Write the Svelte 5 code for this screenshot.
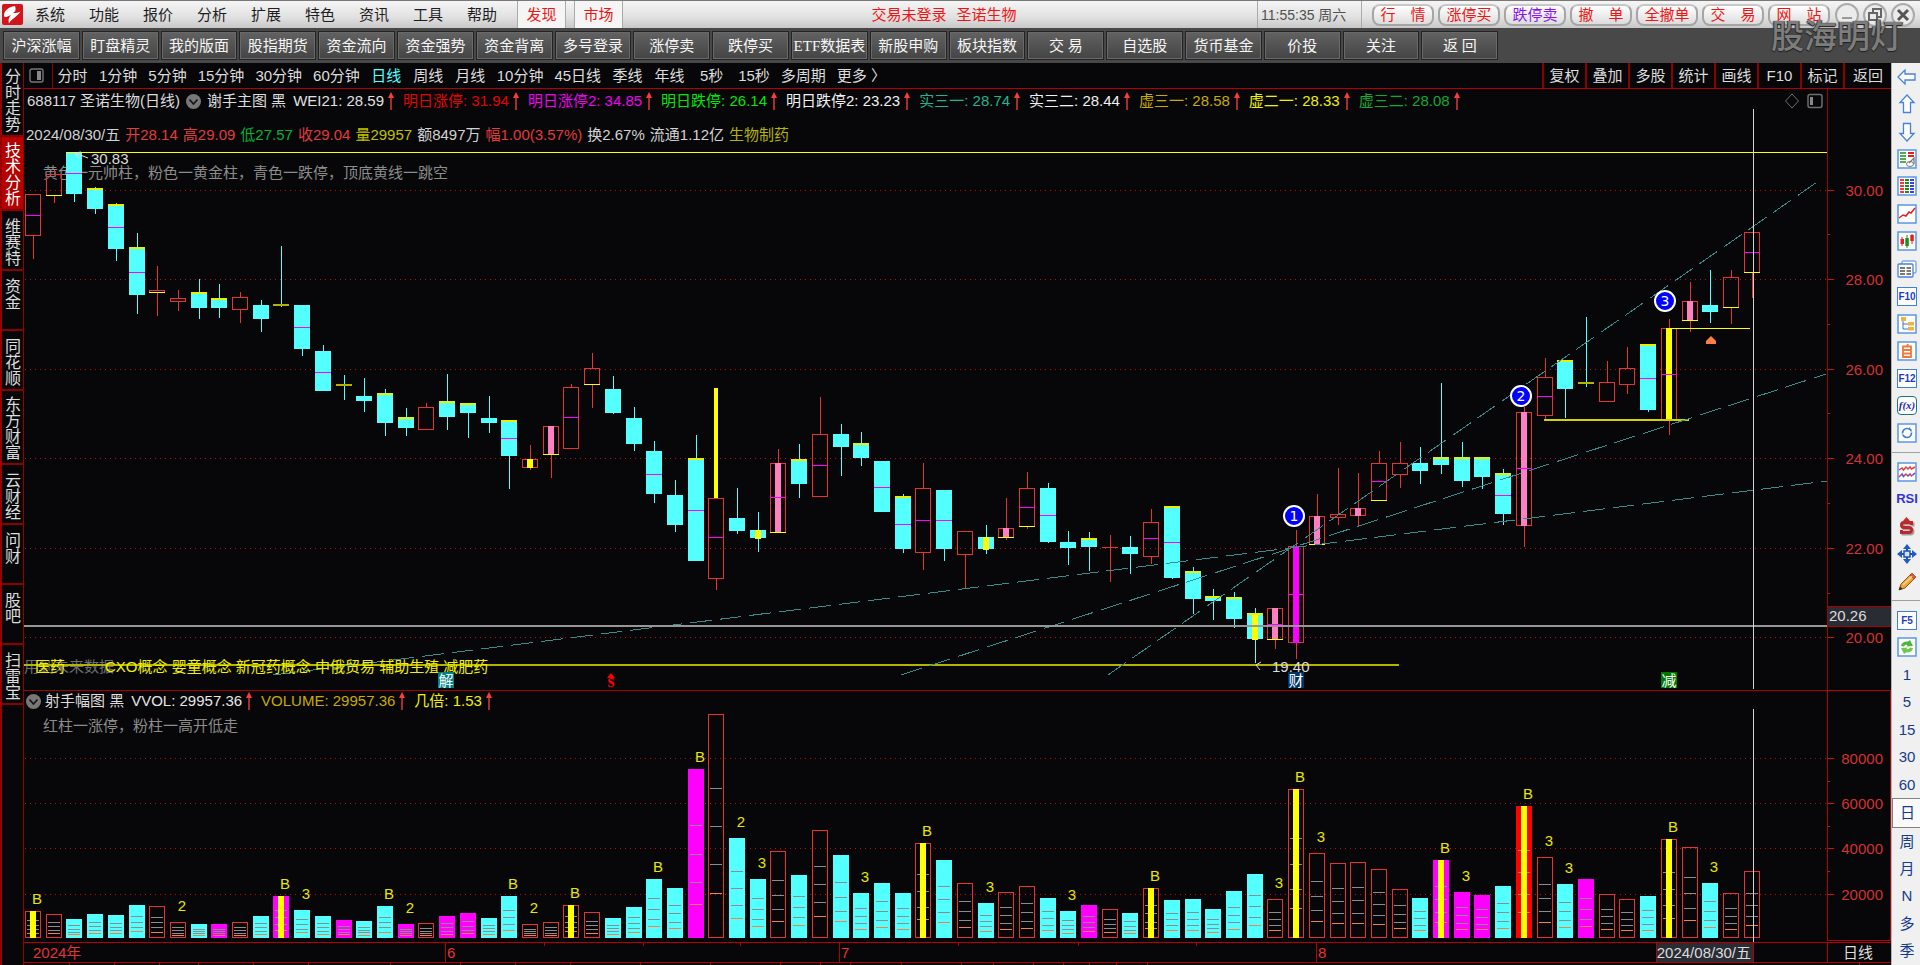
<script>
  const menus = ['系统', '功能', '报价', '分析', '扩展', '特色', '资讯', '工具', '帮助'];
  const pills = [
    ['行　情', 0], ['涨停买', 0], ['跌停卖', 1], ['撤　单', 0], ['全撤单', 0], ['交　易', 0], ['网　站', 0]
  ];
  const tools = ['沪深涨幅', '盯盘精灵', '我的版面', '股指期货', '资金流向', '资金强势', '资金背离', '多号登录', '涨停卖', '跌停买',
    'ETF数据表', '新股申购', '板块指数', '交 易', '自选股', '货币基金', '价投', '关注', '返 回'];
  const leftTabs = ['分时走势', '技术分析', '维赛特', '资金', '同花顺', '东方财富', '云财经', '问财', '股吧', '扫雷宝'];
  const periods = ['分时', '1分钟', '5分钟', '15分钟', '30分钟', '60分钟', '日线', '周线', '月线', '10分钟', '45日线', '季线', '年线', '5秒', '15秒', '多周期', '更多 〉'];
  const actions = ['复权', '叠加', '多股', '统计', '画线', 'F10', '标记', '返回'];
  const indicators = [
    ['WEI21: 28.59', '#e0e0e0'], ['明日涨停: 31.94', '#e60000'], ['明日涨停2: 34.85', '#f000f0'],
    ['明日跌停: 26.14', '#00e600'], ['明日跌停2: 23.23', '#f0f0f0'], ['实三一: 28.74', '#24b48c'],
    ['实三二: 28.44', '#f0f0f0'], ['虚三一: 28.58', '#c8aa00'], ['虚二一: 28.33', '#f0f000'], ['虚三二: 28.08', '#12aa32']
  ];
  const quote = [
    ['2024/08/30/五', '#d2d2d2'], ['开28.14', '#e03c3c'], ['高29.09', '#e03c3c'], ['低27.57', '#00b43c'], ['收29.04', '#e03c3c'],
    ['量29957', '#c0c000'], ['额8497万', '#d2d2d2'], ['幅1.00(3.57%)', '#e03c3c'], ['换2.67%', '#d2d2d2'], ['流通1.12亿', '#d2d2d2'], ['生物制药', '#b4b400']
  ];
  const volInfo = [['VVOL: 29957.36', '#e6e6e6'], ['VOLUME: 29957.36', '#c8aa00'], ['几倍: 1.53', '#f0f000']];

  // kind, high, body top, body bottom, low, middle line, open line (t/b/d), inner bar (y/p/m)
  const candles = [
    ['r',194,194,235,259,215], ['r',170,174,195,203,0,'b'], ['c',152,152,194,202,173], ['c',187,189,209,214,0,'t'],
    ['c',203,205,249,261,227,'t'], ['c',233,248,295,314,272,'t'], ['r',266,290,292,316,0,'b'], ['r',290,298,301,311],
    ['c',279,293,308,319,0,'t'], ['c',284,299,308,318,0,'t'], ['r',292,297,309,323], ['c',300,305,319,332],
    ['c',246,304,305,307,0,'d'], ['c',305,305,349,356,327], ['c',345,351,391,391,372], ['c',375,384,385,400,0,'d'],
    ['c',378,396,401,412], ['c',389,394,423,436,0,'t'], ['c',408,418,428,436,0,'t'], ['r',403,407,429,429],
    ['c',374,402,417,430,0,'t'], ['c',404,404,413,438,0,'t'], ['c',396,418,423,433], ['c',421,421,456,489,438,'t'],
    ['r',445,459,467,470,0,'','y'], ['r',426,426,454,478,0,'b','p'], ['r',384,387,448,448,417], ['r',353,368,384,408,0,'b'],
    ['c',376,389,413,414], ['c',407,418,444,451], ['c',441,451,494,503,474], ['c',480,495,525,532],
    ['c',435,459,561,561,510,'t'], ['r',498,498,578,590,537], ['c',488,518,531,534], ['c',512,530,538,552,0,'','y'],
    ['r',449,463,532,532,497,'b','p'], ['c',444,460,484,498,0,'t'], ['r',397,434,496,496,465], ['c',424,434,447,476],
    ['c',432,444,458,466,0,'t'], ['c',461,461,512,512,487], ['c',494,497,549,553,524,'t'], ['r',463,488,552,570,520],
    ['c',490,490,549,561,520], ['r',531,531,554,589], ['c',525,537,549,554,0,'','y'], ['r',498,528,537,540,0,'b','p'],
    ['r',472,488,526,529,507,'b'], ['c',483,488,542,543,515], ['c',531,542,548,565], ['c',532,539,547,571,0,'t'],
    ['r',535,547,547,582], ['c',536,547,554,574], ['r',509,522,556,564,538], ['c',507,507,578,579,542,'t'],
    ['c',567,572,599,614,0,'t'], ['c',589,597,601,620,0,'t'], ['c',592,598,619,628,0,'t'], ['c',608,614,639,663,0,'t','y'],
    ['r',608,608,639,649,624,'b','p'], ['r',530,546,642,659,594,'','m'], ['r',494,516,544,544,0,'b','p'], ['r',468,514,517,525],
    ['r',473,508,515,526,0,'','p'], ['r',451,463,500,500,481,'b'], ['r',442,463,474,488], ['c',447,463,471,484],
    ['c',383,458,465,474,0,'t'], ['c',442,458,481,487,0,'t'], ['c',458,458,477,489,0,'t'], ['c',469,474,514,525,495,'t'],
    ['r',407,412,525,547,468,'','p'], ['r',358,377,415,420,396], ['c',361,361,389,418,0,'t'], ['c',317,382,383,387,0,'d'],
    ['r',361,382,401,401], ['r',347,368,384,394], ['c',345,345,410,412,378,'t'], ['r',319,328,419,435,374,'','y'],
    ['r',282,301,320,332,0,'b','p'], ['c',270,305,312,323], ['r',270,277,307,324,0,'b'], ['r',232,232,272,298,252,'b']
  ];

  // kind, bar top, highlighted centre, mark
  const volumes = [
    ['r',911,1,'B'],['r',914],['c',919],['c',914],['c',915],['c',905],['r',906],['r',922,0,'2'],['c',924],['m',924],['r',922],['c',916],
    ['m',896,1,'B'],['c',910,0,'3'],['c',916],['m',920],['c',921],['c',906,0,'B'],['m',924,0,'2'],['r',923],['m',916],['m',913],['c',918],
    ['c',896,0,'B'],['r',924,0,'2'],['r',922],['r',905,1,'B'],['r',912],['c',918],['c',907],['c',879,0,'B'],['c',888],['m',769,0,'B'],['r',714],
    ['c',838,0,'2'],['c',879,0,'3'],['r',851],['c',875],['r',830],['c',855],['c',893,0,'3'],['c',883],['c',893],['r',843,1,'B'],['c',860],
    ['r',883],['c',903,0,'3'],['r',892],['r',886],['c',898],['c',911,0,'3'],['m',905],['r',909],['c',913],['r',888,1,'B'],['c',900],['c',899],
    ['c',909],['c',891],['c',874],['r',899,0,'3'],['r',789,1,'B'],['r',853,0,'3'],['r',863],['r',862],['r',869],['r',889],['c',898],
    ['m',860,1,'B'],['m',892,0,'3'],['m',895],['c',886],['f',806,1,'B'],['r',857,0,'3'],['c',884,0,'3'],['m',879],['r',894],['r',899],
    ['c',896],['r',839,1,'B'],['r',847],['c',883,0,'3'],['r',893],['r',871]
  ];
  const fills = { y: '#ffff00', p: '#ff80c0', m: '#ff00ff', c: '#54ffff', f: '#ff0000', r: 'none' };
  const prices = [[190,'30.00'],[279,'28.00'],[369,'26.00'],[458,'24.00'],[548,'22.00'],[637,'20.00']];
  const vols = [[758,'80000'],[803,'60000'],[848,'40000'],[894,'20000']];
  const rays = [[273,675,1827,481],[901,675,1826,374],[1108,675,1820,180]];
  const waves = [[1294,516,'1'],[1521,396,'2'],[1665,301,'3']];
  const badges = [[438,'解','#008080'],[1288,'财','#003366'],[1661,'减','#007800']];
  const months = [[445,'6'],[839,'7'],[1316,'8']];
  const weekTicks = [544,643,740,958,1078,1196];
  const spanTicks = [69,114,159,198,253,308,390,460,515,570,640,710,780,820,850,901,961,993,1033,1063,1089,1116,1147,1859];

  const side = ['left','up','down','table','grid','line','kline','pages','F10','tree','self','F12','fx','ring','|','wave','RSI','dollar','move','pencil','|','F5','cycle',
    '1','5','15','30','60','日','周','月','N','多','季'];
  const drawn = ['left','up','down','table','grid','line','kline','pages','tree','self','ring','wave','dollar','move','pencil','cycle'];

  let w = $state(1867);
  let h1 = $state(601);
  let h2 = $state(252);
  const X = (x) => Math.round(((x - 24) * (w - 64)) / 1803);
  const Y = (y) => Math.round(((y - 89) * h1) / 601);
  const V = (y) => Math.round(((y - 690) * h2) / 252);
  const cx = (i) => X(33 + i * 20.707);
  const axis = $derived(w - 64);
</script>

{#snippet arrow()}
  <svg class="rise" width="8" height="18" viewBox="0 0 8 18" aria-hidden="true"><path d="M4 0L7 6H1Z" fill="#ff3c3c" /><path d="M4 5V18" stroke="#f03c3c" stroke-width="1.4" /></svg>
{/snippet}

{#snippet chevron()}
  <svg class="chev" width="15" height="15" viewBox="0 0 15 15" aria-hidden="true"><circle cx="7.5" cy="7.5" r="7.5" fill="#787878" /><path d="M3.5 5.5L7.5 10L11.5 5.5" fill="none" stroke="#141414" stroke-width="1.6" /></svg>
{/snippet}

<div class="page">
  <header class="top">
    <svg class="logo" width="21" height="21" viewBox="0 0 21 21" aria-hidden="true">
      <rect width="21" height="21" rx="2" fill="#d2141c" />
      <path d="M13 2C6 3 2 7 2 11.500Q2 13.500 4.500 13L9 11C6.500 13.500 6 16 7 19.500C9 15 15 13 18.500 7.500Q15 9.500 11 9Q15 7 13 2Z" fill="#fff" />
    </svg>
    <nav class="menu">{#each menus as m}<button>{m}</button>{/each}</nav>
    <button class="hot">发现</button>
    <button class="hot">市场</button>
    <div class="notice"><span>交易未登录</span><span>圣诺生物</span></div>
    <div class="clock">11:55:35 周六</div>
    <div class="pills">{#each pills as [t, v]}<button class:violet={v}>{t}</button>{/each}</div>
    <div class="win">
      <button aria-label="最小化"><svg width="24" height="24" viewBox="0 0 24 24"><path d="M7 15H17" stroke="#999" stroke-width="2" /></svg></button>
      <button aria-label="还原"><svg width="24" height="24" viewBox="0 0 24 24" fill="none" stroke="#666" stroke-width="2"><path d="M10 10V6H18V14H15" /><rect x="6" y="10" width="8" height="7" /></svg></button>
      <button aria-label="关闭"><svg width="24" height="24" viewBox="0 0 24 24"><path d="M7 7L17 17M17 7L7 17" stroke="#555" stroke-width="3" /></svg></button>
    </div>
    <span class="mark">股海明灯</span>
  </header>

  <nav class="tools"><div class="toolgrid">{#each tools as t}<button>{t}</button>{/each}</div></nav>

  <main>
    <nav class="left">
      {#each leftTabs as t, i}<button class:on={i === 1} class:tall={t.length === 4}>{t}</button>{/each}
      <div class="rest"></div>
    </nav>

    <div class="center">
      <div class="bar">
        <button class="toggle" aria-label="侧栏"><svg width="15" height="15" viewBox="0 0 15 15"><rect x="1" y="1" width="13" height="13" rx="2" fill="none" stroke="#777" stroke-width="1.4" /><rect x="8" y="3" width="4" height="9" fill="#888" /></svg></button>
        <div class="periods">{#each periods as p}<button class:on={p === '日线'}>{p}</button>{/each}</div>
        <div class="actions">{#each actions as a}<button>{a}</button>{/each}</div>
      </div>

      <section class="price" bind:clientWidth={w} bind:clientHeight={h1}>
        <svg class="plot" shape-rendering="crispEdges">
          {#each prices as [y, t]}
            <line x1="1" x2={axis} y1={Y(y) + 0.5} y2={Y(y) + 0.5} stroke="#be1010" stroke-dasharray="1 4" />
            <rect x={axis} y={Y(y)} width="7" height="1" fill="#c81414" />
            <text x={w - 8} y={Y(y) + 6} class="tick">{t}</text>
          {/each}
          {#each [234, 324, 413, 503, 593] as y}<rect x={axis} y={Y(y)} width="3" height="1" fill="#c81414" />{/each}
          <text x="19" y={Y(178)} class="note">黄色一元帅柱，粉色一黄金柱，青色一跌停，顶底黄线一跳空</text>
          <text x="0" y={Y(672)} class="dim">用到未来数据</text>

          {#each candles as [k, hi, top, bot, lo, mid, edge, inner], i}
            {@const c = cx(i)}
            {@const col = k === 'c' ? '#54ffff' : '#e63232'}
            {#if hi < top}<rect x={c} y={Y(hi)} width="1" height={Y(top) - Y(hi)} fill={col} />{/if}
            {#if lo > bot}<rect x={c} y={Y(bot)} width="1" height={Y(lo) - Y(bot)} fill={col} />{/if}
            {#if k === 'c'}
              <rect x={c - 8} y={Y(top)} width="16" height={Math.max(1, Y(bot) - Y(top))} fill="#54ffff" />
            {:else}
              <rect x={c - 7.5} y={Y(top) + 0.5} width="15" height={Math.max(0.2, Y(bot) - Y(top))} fill="none" stroke={col} />
            {/if}
            {#if inner}<rect x={c - 3} y={Y(top)} width="6" height={Y(bot) - Y(top) + 1} fill={fills[inner]} />{/if}
            {#if mid}<rect x={c - 8} y={Y(mid)} width="16" height="1" fill="#ff00ff" />{/if}
            {#if edge === 't'}<rect x={c - 8} y={Y(top) - 1} width="16" height="2" fill="#e6f000" />{/if}
            {#if edge === 'd'}<rect x={c - 8} y={Y(top)} width="16" height="2" fill="#b4b400" />{/if}
            {#if edge === 'b'}<rect x={c - 8} y={Y(bot)} width="16" height="1" fill="#ffff00" />{/if}
          {/each}

          <rect x={cx(33) - 2} y={Y(388)} width="4" height={Y(498) - Y(388)} fill="#ffff00" />
          <rect x={X(66)} y={Y(152)} width={axis - X(66)} height="1" fill="#ffff00" />
          <rect x="0" y={Y(664)} width={X(1399)} height="2" fill="#b4b400" />
          <rect x={X(1544)} y={Y(419)} width={X(1689) - X(1544)} height="2" fill="#d2d200" />
          <rect x={X(1669)} y={Y(328)} width={X(1750) - X(1669)} height="1" fill="#ffff00" />

          <g stroke="#3c8c8c" stroke-dasharray="22 8">
            {#each rays as [a, b, c, d]}<line x1={X(a)} y1={Y(b)} x2={X(c)} y2={Y(d)} />{/each}
          </g>

          <rect x="0" y={Y(625)} width={axis} height="2" fill="#969696" />
          <rect x={X(1753)} y={Y(109)} width="1" height={Y(689) - Y(109)} fill="#d2d2d2" />

          <g fill="none" stroke="#e0e0e0" shape-rendering="auto">
            <path d="M{X(88)} {Y(158)}L{X(75)} {Y(153)}M{X(81)} {Y(152)}L{X(75)} {Y(153)}L{X(79)} {Y(158)}" />
            <path d="M{X(1261)} {Y(662)}L{X(1256)} {Y(665)}L{X(1260)} {Y(670)}" />
          </g>
          <text x={X(91)} y={Y(164)}>30.83</text>
          <text x={X(1272)} y={Y(672)}>19.40</text>
          <text x={X(35)} y={Y(672)} class="topic">医药</text>
          <text x={X(105)} y={Y(672)} class="topic">CXO概念 婴童概念 新冠药概念 中俄贸易 辅助生殖 减肥药</text>

          {#each badges as [x, t, c]}
            <rect x={X(x)} y={Y(672)} width="16" height="16" fill={c} />
            <text x={X(x) + 8} y={Y(672) + 14} class="badge">{t}</text>
          {/each}
          <g shape-rendering="auto">
            <path d="M{X(611) - 4} {Y(678)}l4 -5l4 5z" fill="#f00" />
            <text x={X(611)} y={Y(687)} class="dollar">s</text>
            <path d="M{X(1711)} {Y(336)}l5 5v3h-10v-3z" fill="#ff8040" />
            {#each waves as [x, y, t]}
              <circle cx={X(x)} cy={Y(y)} r="10" fill="#0000ff" stroke="#fff" stroke-width="2" />
              <text x={X(x)} y={Y(y) + 5} class="wave">{t}</text>
            {/each}
          </g>

          <rect x={axis} y={Y(606)} width="64" height="20" fill="#2a2c34" />
          <rect x={axis} y={Y(606)} width="64" height="1" fill="#aa0000" />
          <rect x={axis} y={Y(626)} width="64" height="1" fill="#aa0000" />
          <text x={axis + 2} y={Y(606) + 15}>20.26</text>
          <rect x={axis} y="0" width="1" height={h1} fill="#a00000" />
        </svg>
        <div class="info">
          <span>688117</span><span>圣诺生物(日线)</span>{@render chevron()}<span class="name">谢手主图 黑</span>
          {#each indicators as [t, c]}<span class="ind" style:color={c}>{t}{@render arrow()}</span>{/each}
          <svg class="corner" width="38" height="16" viewBox="0 0 38 16" fill="none" stroke="#6e6e6e" aria-hidden="true"><path d="M7 1L13.5 8L7 15L0.5 8Z" /><rect x="23" y="1.5" width="14" height="13" rx="2" stroke-width="1.5" /><rect x="25" y="4" width="3" height="8" fill="#888" stroke="none" /></svg>
        </div>
        <div class="quote">{#each quote as [t, c]}<span style:color={c}>{t}</span>{/each}</div>
      </section>

      <section class="vol" bind:clientHeight={h2}>
        <svg class="plot" shape-rendering="crispEdges">
          {#each vols as [y, t]}
            <line x1="1" x2={axis} y1={V(y) + 0.5} y2={V(y) + 0.5} stroke="#be1010" stroke-dasharray="1 4" />
            <rect x={axis} y={V(y)} width="7" height="1" fill="#c81414" />
            <text x={w - 8} y={V(y) + 6} class="tick">{t}</text>
          {/each}
          {#each [781, 826, 871] as y}<rect x={axis} y={V(y)} width="3" height="1" fill="#c81414" />{/each}
          {#each volumes as [k, top, centre, mark], i}
            {@const c = cx(i)}
            {@const y = V(top)}
            {@const h = V(938) - y}
            {#if k === 'r'}
              <rect x={c - 7.5} y={y + 0.5} width="15" height={h - 1} fill="none" stroke="#e63232" />
            {:else}
              <rect x={c - 8} {y} width="16" height={h} fill={fills[k]} />
            {/if}
            {#each [0.33, 0.5, 0.67] as f}<rect x={c - 6} y={Math.round(y + h * f)} width="12" height="1" fill="#8c8c8c" />{/each}
            <rect x={c - 6} y={Math.round(y + h * 0.8)} width="12" height="1" fill="#f08246" />
            {#if centre}<rect x={c - 3} {y} width="6" height={h} fill="#ffff00" />{/if}
            {#if mark}<text x={c + 4} y={y - (mark === 'B' ? 7 : 11)} class="bs">{mark}</text>{/if}
          {/each}
          <rect x={X(1753)} y={V(709)} width="1" height={h2 - V(709)} fill="#d2d2d2" />
          <rect x="0" y="0" width={w} height="1" fill="#a00000" />
          <rect x={axis + 0.5} y="0.5" width="63" height={h2 - 2} fill="none" stroke="#b40000" />
        </svg>
        <div class="info low">
          {@render chevron()}<span class="name">射手幅图 黑</span>
          {#each volInfo as [t, c]}<span class="ind" style:color={c}>{t}{@render arrow()}</span>{/each}
        </div>
        <p>红柱一涨停，粉柱一高开低走</p>
      </section>

      <div class="ruler">
        <svg width="100%" height="23" shape-rendering="crispEdges">
          <rect x="0" y="0" width="100%" height="1" fill="#b40000" />
          <rect x="0" y="20" width="100%" height="1" fill="#b40000" />
          <text x="9" y="16" class="red">2024年</text>
          {#each months as [x, t]}
            <rect x={X(x)} y="0" width="1" height="20" fill="#b40000" />
            <text x={X(x) + 2} y="16" class="red">{t}</text>
          {/each}
          {#each weekTicks as x}<rect x={X(x)} y="0" width="1" height="4" fill="#b40000" />{/each}
          {#each spanTicks as x}<rect x={X(x)} y="21" width="1" height="2" fill="#b40000" />{/each}
          <rect x={X(1656)} y="1" width={X(1753) - X(1656)} height="19" fill="#2a2c34" />
          <rect x={X(1656)} y="1" width="1" height="19" fill="#b40000" />
          <rect x={X(1753)} y="1" width="1" height="19" fill="#b40000" />
          <text x={X(1753) - 2} y="16" text-anchor="end">2024/08/30/五</text>
          <rect x={axis} y="0" width="1" height="20" fill="#b40000" />
          <text x={axis + 31} y="16" text-anchor="middle">日线</text>
        </svg>
      </div>
    </div>

    <nav class="right">
      {#each side as s}
        {#if s === '|'}
          <div class="sep"></div>
        {:else if drawn.includes(s)}
          <button aria-label={s}>
            <svg width="20" height="20" viewBox="0 0 20 20" fill="none">
              {#if ['table', 'grid', 'line', 'kline', 'tree', 'self', 'ring', 'wave', 'cycle'].includes(s)}
                <rect x="1" y="1" width="18" height="18" fill="#fff" stroke="#5a96e6" stroke-width="1.5" />
              {/if}
              {#if s === 'left'}<path d="M1 10L8 3V7H18V13H8V17Z" fill="#fff" stroke="#4682dc" stroke-width="1.3" />
              {:else if s === 'up'}<path d="M10 1L17 8.500H13.500V18.500H6.500V8.500H3Z" fill="#fff" stroke="#4682dc" stroke-width="1.3" />
              {:else if s === 'down'}<path d="M10 19L17 11.500H13.500V1.500H6.500V11.500H3Z" fill="#fff" stroke="#4682dc" stroke-width="1.3" />
              {:else if s === 'table'}
                <path d="M3 4H9M3 7H9M3 10H9M3 13H9" stroke="#1e8c1e" stroke-width="1.6" /><path d="M11 4H17M11 7H17" stroke="#e61e1e" stroke-width="1.8" />
                <ellipse cx="13" cy="15" rx="3.500" ry="2.500" fill="#fff" stroke="#787878" /><path d="M12 14L17 9V15" stroke="#787878" stroke-width="1.3" />
              {:else if s === 'grid'}
                <g stroke-width="4" stroke-dasharray="2 1"><path d="M5 3V17" stroke="#f03c3c" /><path d="M10 3V17" stroke="#1e8c1e" /><path d="M15 3V17" stroke="#3c3cf0" /></g>
              {:else if s === 'line'}<path d="M2 14L6 11L9 12L12 8L14 9L18 4" stroke="#e61e1e" stroke-width="1.5" />
              {:else if s === 'kline'}
                <path d="M5 6V15M15 3V13" stroke="#e61e1e" /><path d="M10 4V17" stroke="#1e8c1e" /><rect x="3.500" y="8" width="3.500" height="5" fill="#e61e1e" /><rect x="8.300" y="7" width="3.500" height="8" fill="#1e8c1e" /><rect x="13.300" y="4" width="3.500" height="6" fill="#e61e1e" />
              {:else if s === 'pages'}
                <rect x="5" y="2" width="14" height="12" rx="1" fill="#fff" stroke="#4682dc" /><rect x="1" y="5" width="15" height="13" rx="1" fill="#fff" stroke="#4682dc" stroke-width="1.3" /><path d="M3 9H8M9.500 9H14M3 12H8M9.500 12H14M3 15H8M9.500 15H14" stroke="#505050" stroke-width="1.3" />
              {:else if s === 'tree'}
                <path d="M6 6V15H11M6 10H11" stroke="#3c78c8" /><path d="M4 3h5v4H4zM11 8h6v3.500h-6zM11 13h6v3.500h-6z" fill="#f0b43c" />
              {:else if s === 'self'}
                <path d="M6 5.500H14V16H6ZM6 9H14M6 12.500H14M10 5L11 3" stroke="#f0783c" stroke-width="1.800" />
              {:else if s === 'ring'}<circle cx="10" cy="10" r="4.500" stroke="#3c82c8" stroke-width="1.7" /><path d="M4.500 11h2.500M13 9h2.500" stroke="#fff" /><path d="M12 4l3 3h-3z" fill="#3c82c8" />
              {:else if s === 'wave'}<path d="M2 8L5 6L6.500 8L9 5L11 7L13 5L14.500 7L18 5" stroke="#e63c3c" stroke-width="1.5" /><path d="M2 15L5 12L6.500 14.500L9 12L11 14L13 12L14.500 14L18 11" stroke="#e63c3c" stroke-width="1.5" stroke-dasharray="4 4" /><path d="M2 15L5 12L6.500 14.500L9 12L11 14L13 12L14.500 14L18 11" stroke="#3c50e6" stroke-width="1.5" stroke-dasharray="4 4" stroke-dashoffset="4" />
              {:else if s === 'dollar'}<path d="M14.500 8V5.500H7Q4.500 5.500 4.500 8T7 10.500H12Q14.500 10.500 14.500 13T12 15.500H4.500V13" stroke="#a0a0a0" stroke-width="3" transform="translate(1.500 1.500)" /><path d="M14.500 8V5.500H7Q4.500 5.500 4.500 8T7 10.500H12Q14.500 10.500 14.500 13T12 15.500H4.500V13" stroke="#be2828" stroke-width="3" /><path d="M9.500 0L13 4H6Z" fill="#c82828" />
              {:else if s === 'move'}<path d="M10 1V19M1 10H19" stroke="#1e50b4" stroke-width="2" /><path d="M10 0L14 5H6ZM10 20L14 15H6ZM0 10L5 6V14ZM20 10L15 6V14Z" fill="#1e5ac8" /><rect x="7" y="7" width="6" height="6" fill="#d2e6ff" stroke="#1e50b4" stroke-width="1.500" />
              {:else if s === 'pencil'}<path d="M2 18L4 12L14 2L18 6L8 16Z" fill="#f0a03c" stroke="#8c5a1e" /><path d="M13 3L15 1L19 5L17 7Z" fill="#e65050" stroke="#8c5a1e" stroke-width=".8" /><path d="M2 18L3 14.500L5.500 17Z" fill="#282828" /><path d="M6 13L15 4.500" stroke="#ffdc8c" stroke-width="1.500" />
              {:else if s === 'cycle'}<path d="M4 9Q5 4 11 4.500L13 3L16 9L9.500 9.500L10.500 8Q8 7 7 9.500Z" fill="#50b43c" /><path d="M16 11Q15 16 9 15.500L7 17L4 11L10.500 10.500L9.500 12Q12 13 13 10.500Z" fill="#6ec84b" />
              {/if}
            </svg>
          </button>
        {:else}
          <button class:on={s === '日'} class:rsi={s === 'RSI'}><span class:box={['F10', 'F12', 'F5'].includes(s)} class:fx={s === 'fx'}>{s === 'fx' ? 'f(x)' : s}</span></button>
        {/if}
      {/each}
    </nav>
  </main>
</div>

<style>
  :global(body) { margin: 0; background: #070709; }
  .page {
    display: flex; flex-direction: column; min-height: 100vh; overflow: hidden;
    font: 15px/20px "Liberation Sans", "Noto Sans CJK SC", sans-serif; color: #dcdcdc; background: #070709;
  }
  button { font: inherit; color: inherit; background: none; border: 0; padding: 0; margin: 0; white-space: nowrap; }
  svg { display: block; flex: none; }
  svg text { font: 15px "Liberation Sans", "Noto Sans CJK SC", sans-serif; fill: #dcdcdc; }

  .top {
    position: relative; display: flex; align-items: stretch; height: 28px; box-sizing: border-box;
    border-top: 1px solid #787878; background: linear-gradient(#f5f5f5, #e1e1e1 60%, #c8c8c8); color: #1e1e1e;
  }
  .logo { margin: 3px 0 0 2px; }
  .menu { display: flex; margin-right: 8px; }
  .menu button { width: 54px; }
  .hot { width: 49px; margin-right: 8px; color: #f01414; border: solid #aaa; border-width: 0 1px; background: #f5f5f5; }
  .notice { flex: 1; display: flex; gap: 10px; align-items: center; justify-content: center; color: #f01414; }
  .clock { display: flex; align-items: center; width: 105px; padding-left: 3px; box-sizing: border-box; border: solid #aaa; border-width: 0 1px; color: #505050; font-size: 14px; white-space: nowrap; }
  .pills { display: flex; gap: 4px; margin-left: 10px; align-items: center; }
  .pills button {
    width: 62px; height: 22px; line-height: 18px; border: 2px solid #a5a5a5; border-top-color: #c8c8c8; border-radius: 8px;
    color: #f01414; background: linear-gradient(#fff, #dcdcdc);
  }
  .pills .violet { color: #8c14f0; }
  .win { display: flex; gap: 4px; margin: 0 5px; align-items: center; }
  .win button { width: 24px; height: 24px; box-sizing: border-box; border: 2px solid #aaa; border-radius: 50%; background: #ebebeb; display: flex; align-items: center; justify-content: center; }
  .mark {
    position: absolute; right: 17px; top: 12px; z-index: 2; font-size: 33px; line-height: 48px; font-weight: 500; color: #7d7d7d;
    text-shadow: 0 1px 1px #1e1e1e, 1px 0 1px #3c3c3c, -1px 0 1px #3c3c3c; pointer-events: none;
  }

  .tools { height: 35px; box-sizing: border-box; padding: 3px 0 0 3px; background: #484848; }
  .toolgrid { display: grid; grid-template-columns: repeat(19, 1fr); gap: 2px; width: 78%; }
  .toolgrid button {
    height: 29px; color: #f5f5f5; border: 1px solid #232323; box-shadow: inset 0 0 0 1px #696969;
    background: linear-gradient(#626262, #444); font-family: "Liberation Serif", "Noto Sans CJK SC", serif;
  }

  main { flex: 1; display: flex; min-height: 0; }
  .left { width: 24px; display: flex; flex-direction: column; box-sizing: border-box; border: solid #960000; border-width: 0 1px 0 2px; }
  .left button {
    height: 60px; box-sizing: border-box; border-bottom: 2px solid #8c0000; padding: 7px 3px 0 0;
    writing-mode: vertical-rl; text-orientation: upright; line-height: 18px; font-size: 16px; text-align: start; color: #dcdcdc;
  }
  .left .tall { height: 74px; padding-top: 5px; }
  .left .on { background: #b40000; color: #fff; }
  .rest { flex: 1; }

  .center { flex: 1; min-width: 0; display: flex; flex-direction: column; }
  .bar { display: flex; height: 26px; box-sizing: border-box; border-bottom: 1px solid #b40000; }
  .toggle { width: 29px; padding-left: 5px; border-right: 1px solid #8c0000; }
  .periods { flex: 1; display: flex; gap: 11px; padding-left: 4px; }
  .periods button { min-width: 31px; }
  .periods .on { color: #54ffff; }
  .actions { display: flex; }
  .actions button { width: 43px; border-left: 2px solid #8c0000; box-sizing: border-box; }
  .actions button:last-child { width: 48px; }

  .price, .vol { position: relative; min-height: 0; }
  .price { flex: 601 1 0; }
  .vol { flex: 252 1 0; }
  .plot { position: absolute; inset: 0; width: 100%; height: 100%; }
  .info, .quote { position: relative; display: flex; align-items: center; white-space: nowrap; }
  .info { gap: 4px; padding: 2px 12px 0 3px; }
  .chev { margin: 0 2px; }
  .name { margin-right: 3px; }
  .ind { display: flex; align-items: center; margin-right: 4px; }
  .rise { margin-left: 3px; }
  .corner { margin-left: auto; margin-right: 56px; }
  .quote { gap: 5px; padding: 14px 0 0 2px; }
  .low { padding-top: 1px; padding-left: 0; }
  .low .chev { margin-right: 0; }
  .vol p { position: relative; margin: 5px 0 0 19px; color: #8c8c8c; }
  .ruler { height: 23px; }

  svg .tick { fill: #d23232; text-anchor: end; }
  svg .red { fill: #e63232; }
  svg .note { fill: #8c8c8c; }
  svg .dim { fill: #6e6e6e; }
  svg .topic { fill: #f0f000; }
  svg .bs { fill: #e6e600; text-anchor: middle; }
  svg .badge { fill: #fff; text-anchor: middle; }
  svg .wave { fill: #fff; text-anchor: middle; font: 14px "DejaVu Sans", sans-serif; }
  svg .dollar { fill: #f00; text-anchor: middle; font: bold 18px "Liberation Serif", serif; }

  .right { width: 29px; display: flex; flex-direction: column; background: #f0f0f0; border-left: 1px solid #b4b4b4; box-sizing: border-box; color: #143c8c; }
  .right button { flex: 1 1 0; min-height: 0; display: flex; align-items: center; justify-content: center; padding-left: 2px; }
  .right .on { border: 1px solid #828282; border-right: 0; background: #fafafa; }
  .right .rsi { font-size: 13px; font-weight: bold; color: #3232dc; }
  .sep { height: 1px; margin: 5px 0; background: #a0a0a0; }
  .box { width: 18px; height: 17px; border: 1px solid #3c82dc; background: #fff; font-size: 10px; font-weight: bold; line-height: 17px; text-align: center; color: #1e3cc8; }
  .fx { width: 18px; height: 17px; border: 1px solid #1e7878; border-radius: 4px; background: #fff; font: italic bold 11px/16px "Liberation Serif", serif; text-align: center; color: #1e28b4; }
</style>
